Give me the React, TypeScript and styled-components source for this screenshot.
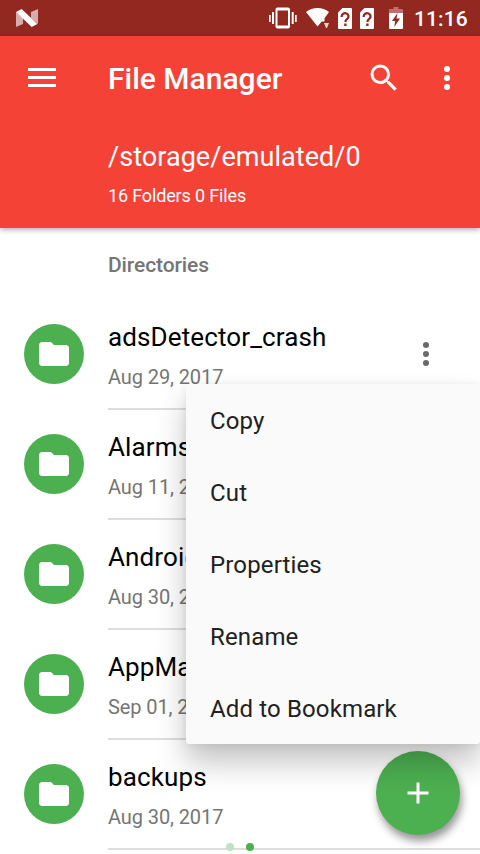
import React from "react";
import styled, { createGlobalStyle } from "styled-components";

const GlobalStyle = createGlobalStyle`
  * { box-sizing: border-box; }
  body {
    margin: 0;
    overflow: hidden;
    background: #fff;
    font-family: Roboto, "Noto Sans", sans-serif;
  }
`;

const Screen = styled.div`
  position: relative;
  display: flex;
  flex-direction: column;
  width: 480px;
  height: 854px;
  overflow: hidden;
  background: #fff;
`;

const StatusBar = styled.div`
  display: flex;
  align-items: center;
  justify-content: space-between;
  flex: none;
  height: 36px;
  padding: 0 12px 0 15px;
  background: #922820;
`;

const StatusIcons = styled.div`
  display: flex;
  align-items: center;
  height: 36px;
`;

const StatusGlyph = styled.span<{ $gap?: number }>`
  display: flex;
  margin-left: ${(p) => p.$gap ?? 0}px;
`;

const Clock = styled.span`
  width: 54px;
  margin-left: 11px;
  padding-top: 1px;
  color: #fff;
  font-size: 21px;
  font-weight: 500;
  line-height: 36px;
  letter-spacing: 0.1px;
  white-space: nowrap;
`;

const Header = styled.header`
  flex: none;
  height: 192px;
  background: #f44336;
  color: #fff;
  box-shadow: 0 2px 5px rgba(0, 0, 0, 0.3);
`;

const Toolbar = styled.div`
  display: flex;
  align-items: center;
  height: 84px;
  padding: 0 15px 0 24px;
`;

const Title = styled.h1`
  flex: 1;
  margin: 0 0 0 48px;
  padding-top: 2px;
  font-size: 30px;
  font-weight: 500;
  line-height: 82px;
`;

const Actions = styled.div`
  display: flex;
  gap: 27px;
`;

const Location = styled.div`
  padding: 20px 0 0 108px;
`;

const Path = styled.div`
  font-size: 27px;
  line-height: 34px;
  letter-spacing: 0.05px;
`;

const Counts = styled.div`
  margin-top: 10px;
  font-size: 18px;
  line-height: 24px;
  letter-spacing: -0.15px;
`;

const Section = styled.h2`
  flex: none;
  height: 72px;
  margin: 0;
  padding-left: 108px;
  color: #757575;
  font-size: 21px;
  font-weight: 500;
  line-height: 74px;
  letter-spacing: -0.1px;
`;

const List = styled.div`
  display: flex;
  flex-direction: column;
`;

const Row = styled.div`
  display: flex;
  align-items: center;
  flex: none;
  height: 110px;
  padding-left: 24px;
`;

const Avatar = styled.div`
  display: flex;
  align-items: center;
  justify-content: center;
  width: 60px;
  height: 60px;
  margin-right: 24px;
  margin-top: -2px;
  border-radius: 50%;
  background: #4caf50;
`;

const Details = styled.div`
  display: flex;
  flex: 1;
  align-items: center;
  justify-content: space-between;
  height: 110px;
  padding-right: 36px;
  border-bottom: 2px solid #dedede;
`;

const Labels = styled.div`
  padding-top: 6px;
`;

const Name = styled.div`
  color: #000;
  font-size: 26px;
  line-height: 40px;
  letter-spacing: 0.12px;
`;

const Modified = styled.div`
  color: #757575;
  font-size: 20px;
  line-height: 40px;
  letter-spacing: -0.1px;
`;

const Fab = styled.button`
  position: absolute;
  left: 376px;
  top: 751px;
  display: flex;
  align-items: center;
  justify-content: center;
  width: 84px;
  height: 84px;
  padding: 0;
  border: 0;
  border-radius: 50%;
  background: #4caf50;
  box-shadow: 2px 6px 9px rgba(0, 0, 0, 0.42);
`;

const Pager = styled.div`
  position: absolute;
  left: 226px;
  top: 843px;
  display: flex;
  gap: 12px;
`;

const PageDot = styled.span<{ $active?: boolean }>`
  width: 8px;
  height: 8px;
  border-radius: 50%;
  background: ${(p) => (p.$active ? "#4caf50" : "#c0e2c1")};
`;

const Menu = styled.div`
  position: absolute;
  left: 186px;
  top: 384px;
  width: 294px;
  border-radius: 3px;
  background: #fafafa;
  box-shadow: 0 18px 30px rgba(0, 0, 0, 0.24), 0 1px 8px rgba(0, 0, 0, 0.07);
`;

const MenuItem = styled.div`
  height: 72px;
  padding-left: 24px;
  color: #212121;
  font-size: 24px;
  line-height: 75px;
  letter-spacing: 0.14px;
`;

const NougatIcon = () => (
  <svg width="24" height="20" viewBox="15 8 24 20">
    <path d="M16 12 23 18V24L16 27ZM31 12 38 9V24L31 18Z" fill="#fff" opacity=".62" />
    <path d="M16 12 21.7 9 37.3 24 31.7 27Z" fill="#fff" />
  </svg>
);

const VibrateIcon = () => (
  <svg width="28" height="22" viewBox="0 0 28 22" fill="#fff">
    <path d="M0 8h1.7v7H0zM3 5h2v12H3zM22.7 5h2v12h-2zM26 8h1.7v7H26z" />
    <path
      fillRule="evenodd"
      d="M8.500 .5h10.500a2 2 0 0 1 2 2v17a2 2 0 0 1-2 2H8.500a2 2 0 0 1-2-2v-17a2 2 0 0 1 2-2zM8.500 3.500v15h10.500v-15z"
    />
  </svg>
);

const WifiIcon = () => (
  <svg width="24" height="22" viewBox="0 0 24 22" fill="#fff">
    <path d="M0 5C6.500-.3 16.500-.3 23 5L18.500 11.200V14.500H15.700L11.500 19.500Z" />
    <path d="M18 16h5l-2 5h-1z" opacity=".8" />
  </svg>
);

const SimIcon = () => (
  <svg width="14" height="21" viewBox="0 0 14 21">
    <path d="M4.500 0H13q1 0 1 1v19q0 1-1 1H1q-1 0-1-1V4.500z" fill="#fff" />
    <path d="M3.700 9V8.300a3.400 3.100 0 1 1 5.700 2.300Q7.400 12 7.400 14" fill="none" stroke="#922820" strokeWidth="2.300" />
    <path d="M6.200 15.500h2.400V18H6.200z" fill="#922820" />
  </svg>
);

const BatteryIcon = () => (
  <svg width="14" height="22" viewBox="0 0 14 22">
    <path d="M4.500 0h5v2H14v4H0V2h4.500z" fill="#fff" opacity=".35" />
    <path d="M0 6h14v15q0 1-1 1H1q-1 0-1-1z" fill="#fff" />
    <path d="M8.500 6 3 14h3.200L5.300 20 11 11.500H7.500z" fill="#922820" />
  </svg>
);

const MenuIcon = () => (
  <svg width="36" height="36" viewBox="0 0 36 36" fill="#fff">
    <path d="M4 8h28v3H4zM4 16h28v3H4zM4 24h28v3H4z" />
  </svg>
);

const SearchIcon = () => (
  <svg width="36" height="36" viewBox="0 0 24 24" fill="#fff">
    <path d="M15.5 14h-.79l-.28-.27A6.471 6.471 0 0 0 16 9.5 6.500 6.500 0 1 0 9.500 16c1.610 0 3.090-.59 4.230-1.570l.27.280v.79l5 4.990L20.490 19l-4.990-5zm-6 0C7.010 14 5 11.990 5 9.500S7.010 5 9.500 5 14 7.010 14 9.500 11.990 14 9.500 14z" />
  </svg>
);

const MoreIcon = ({ color }: { color: string }) => (
  <svg width="36" height="36" viewBox="0 0 36 36" fill={color}>
    <circle cx="18" cy="9" r="3" />
    <circle cx="18" cy="18" r="3" />
    <circle cx="18" cy="27" r="3" />
  </svg>
);

const FolderIcon = () => (
  <svg width="36" height="36" viewBox="0 0 24 24" fill="#fff">
    <path d="M10 4H4c-1.100 0-1.990.9-1.990 2L2 18c0 1.100.9 2 2 2h16c1.100 0 2-.9 2-2V8c0-1.100-.9-2-2-2h-8l-2-2z" />
  </svg>
);

const PlusIcon = () => (
  <svg width="36" height="36" viewBox="0 0 24 24" fill="#fff">
    <path d="M19 13h-6v6h-2v-6H5v-2h6V5h2v6h6v2z" />
  </svg>
);

const folders = [
  { name: "adsDetector_crash", date: "Aug 29, 2017" },
  { name: "Alarms", date: "Aug 11, 2017" },
  { name: "Android", date: "Aug 30, 2017" },
  { name: "AppManager", date: "Sep 01, 2017" },
  { name: "backups", date: "Aug 30, 2017" },
];

const actions = ["Copy", "Cut", "Properties", "Rename", "Add to Bookmark"];

export default function App() {
  return (
    <>
      <GlobalStyle />
      <Screen>
        <StatusBar>
          <NougatIcon />
          <StatusIcons>
            <StatusGlyph><VibrateIcon /></StatusGlyph>
            <StatusGlyph $gap={9}><WifiIcon /></StatusGlyph>
            <StatusGlyph $gap={8}><SimIcon /></StatusGlyph>
            <StatusGlyph $gap={8}><SimIcon /></StatusGlyph>
            <StatusGlyph $gap={15}><BatteryIcon /></StatusGlyph>
            <Clock>11:16</Clock>
          </StatusIcons>
        </StatusBar>
        <Header>
          <Toolbar>
            <MenuIcon />
            <Title>File Manager</Title>
            <Actions>
              <SearchIcon />
              <MoreIcon color="#fff" />
            </Actions>
          </Toolbar>
          <Location>
            <Path>/storage/emulated/0</Path>
            <Counts>16 Folders 0 Files</Counts>
          </Location>
        </Header>
        <Section>Directories</Section>
        <List>
          {folders.map((folder) => (
            <Row key={folder.name}>
              <Avatar><FolderIcon /></Avatar>
              <Details>
                <Labels>
                  <Name>{folder.name}</Name>
                  <Modified>{folder.date}</Modified>
                </Labels>
                <MoreIcon color="#696969" />
              </Details>
            </Row>
          ))}
        </List>
        <Fab aria-label="Add"><PlusIcon /></Fab>
        <Pager>
          <PageDot />
          <PageDot $active />
        </Pager>
        <Menu>
          {actions.map((label) => (
            <MenuItem key={label}>{label}</MenuItem>
          ))}
        </Menu>
      </Screen>
    </>
  );
}
